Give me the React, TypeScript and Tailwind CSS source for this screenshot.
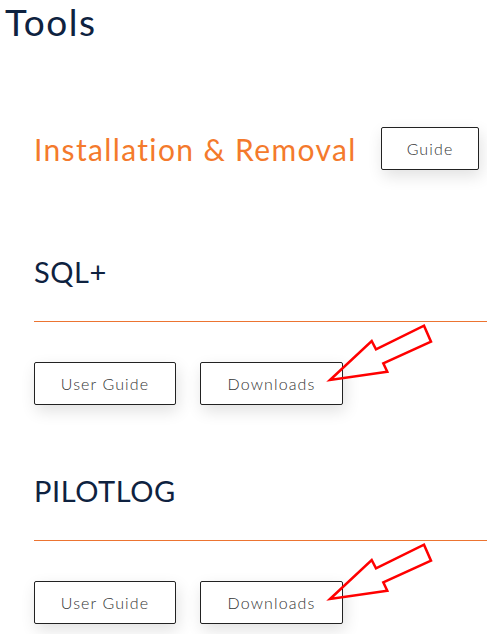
import React from "react";

function Arrow() {
    return (
        <svg
            className="absolute left-[320px] top-[-47px] pointer-events-none"
            width="120"
            height="70"
            viewBox="0 0 120 70"
            fill="none"
        >
            <polygon
                points="10,65 51.7,26 56,34.3 104,10.7 111,26.7 63.3,48.3 67.3,56.7"
                stroke="#ff0000"
                strokeWidth="2.5"
                strokeLinejoin="miter"
            />
        </svg>
    );
}

function OutlineButton({ label, className = "" }: { label: string; className?: string }) {
    return (
        <button className={"h-[43px] border border-[#222] rounded-[2px] bg-white text-[16px] font-light tracking-[0.07em] text-[#333] shadow-[2px_6px_16px_rgba(0,0,0,0.12)] " + className}>
            {label}
        </button>
    );
}

function ToolSection({ title, className = "" }: { title: string; className?: string }) {
    return (
        <section className={className}>
            <h2 className="pl-[34px] text-[29px] leading-[36px] tracking-[0.02em] text-[#0e2240]">{title}</h2>
            <div className="ml-[34px] mt-[31px] h-px bg-[#ec7431]" />
            <div className="relative mt-[40px] flex pl-[34px]">
                <OutlineButton label="User Guide" className="w-[142px]" />
                <OutlineButton label="Downloads" className="ml-[24px] w-[143px]" />
                <Arrow />
            </div>
        </section>
    );
}

export default function App() {
    return (
        <div className="w-[487px] h-[634px] overflow-hidden bg-white font-['Lato',sans-serif]">
            <h1 className="pl-[5px] text-[37px] leading-[44px] tracking-[0.04em] text-[#0e2240]">Tools</h1>

            <div className="mt-[83px] flex items-center pl-[34px] pr-[8px]">
                <h2 className="text-[30px] leading-[36px] tracking-[0.045em] text-[#f47a2c]">Installation &amp; Removal</h2>
                <OutlineButton label="Guide" className="ml-auto w-[98px]" />
            </div>

            <ToolSection title="SQL+" className="mt-[84px]" />
            <ToolSection title="PILOTLOG" className="mt-[68px]" />
        </div>
    );
}
